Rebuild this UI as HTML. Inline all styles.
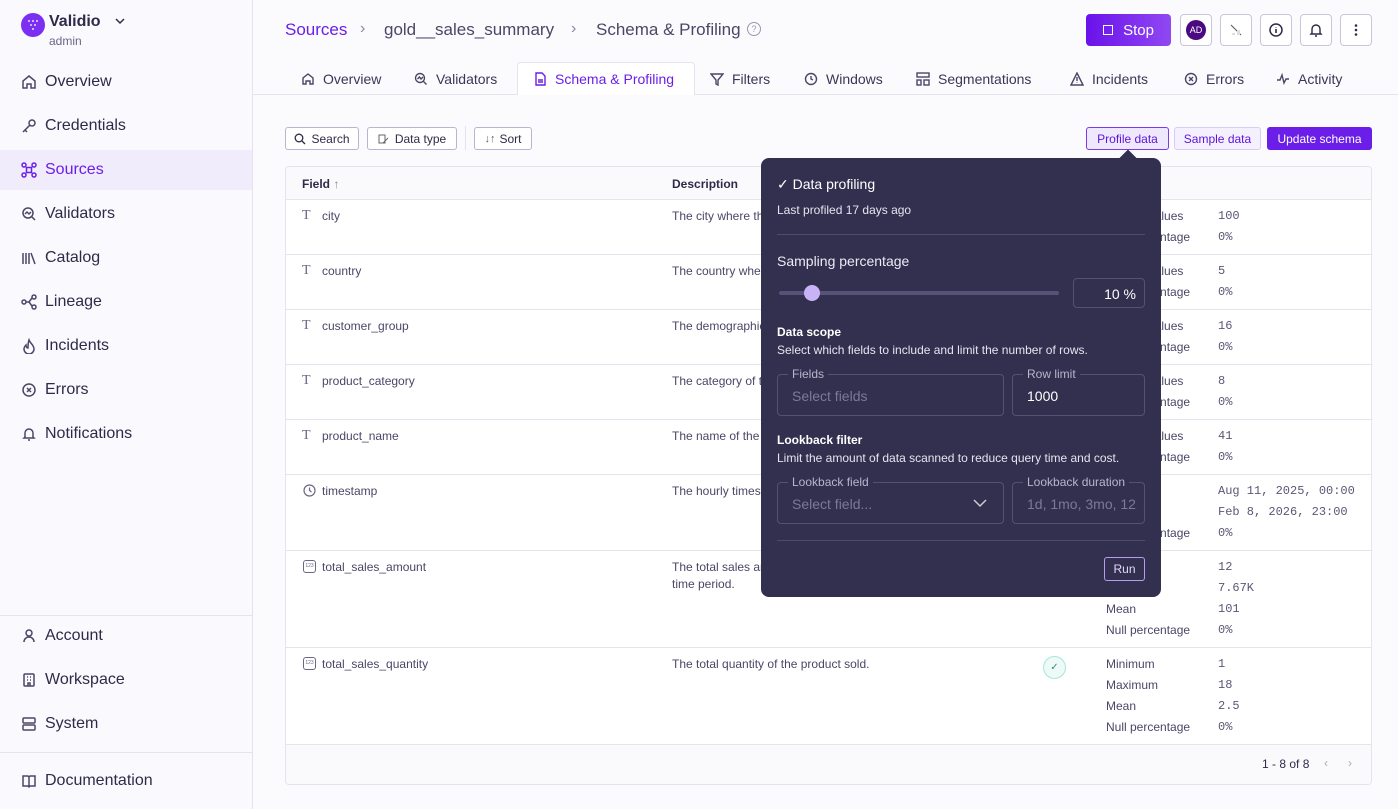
<!DOCTYPE html>
<html><head><meta charset="utf-8"><style>
*{box-sizing:border-box;margin:0;padding:0}
body{width:1398px;height:809px;overflow:hidden;font-family:"Liberation Sans",sans-serif;background:#fbfbfe;color:#2e2b48;position:relative}
.abs{position:absolute}
.side{position:absolute;left:0;top:0;width:253px;height:809px;background:#f9f9fe;border-right:1px solid #e4e3ee}
.nav{position:absolute;left:0;width:252px;height:40px;display:flex;align-items:center;padding-left:21px;font-size:16px;color:#2e2b48}
.nav svg{width:16px;height:16px;margin-right:8px;fill:none;stroke:#4a4766;stroke-width:1.5}
.nav.act{background:#f1ecfb;color:#6b1ee8}
.nav.act svg{stroke:#6b1ee8}
.hr{position:absolute;left:0;width:252px;border-top:1px solid #e4e3ee}
.tab{position:absolute;top:62px;height:33px;display:flex;align-items:center;font-size:14px;color:#3a3756}
.tab svg{width:14px;height:14px;margin-right:8px;fill:none;stroke:#4a4766;stroke-width:1.4}
.btn{position:absolute;height:23px;border:1px solid #b9b4d2;border-radius:3px;font-size:12px;display:flex;align-items:center;justify-content:center;background:#fff;color:#2e2b48}
.ib{position:absolute;top:14px;width:32px;height:32px;border:1px solid #c9c6dc;border-radius:4px;background:#fff;display:flex;align-items:center;justify-content:center}
.tbl{position:absolute;left:285px;top:166px;width:1087px;height:619px;border:1px solid #e4e3ee;border-radius:4px;background:#fff;overflow:hidden}
.row{position:absolute;left:0;width:1085px;border-top:1px solid #e4e3ee}
.t{position:absolute;font-size:12px;color:#4a4766;white-space:nowrap}
.m{font-family:"Liberation Mono",monospace;font-size:12px;color:#5a5775}
.ico{position:absolute;left:16px;font-family:"Liberation Serif",serif;font-size:14px;color:#6a6785}
.pop{position:absolute;left:761px;top:158px;width:400px;height:439px;background:#33304f;border-radius:8px;color:#fff}
.fld{position:absolute;height:42px;border:1px solid #555271;border-radius:4px}
.lg{position:absolute;top:-8px;left:10px;background:#33304f;padding:0 4px;font-size:12px;color:#b8b5cc}
.ph{position:absolute;left:14px;top:13px;font-size:14px;color:#7c7995}
</style></head><body>
<div class="side">
 <div class="abs" style="left:21px;top:13px;width:24px;height:24px;border-radius:50%;background:#7b2ff0"></div>
 <svg class="abs" style="left:27px;top:19px" width="12" height="12"><g fill="#e8d8ff"><circle cx="2" cy="2" r="1"/><circle cx="6" cy="2" r="1"/><circle cx="10" cy="2" r="1"/><circle cx="4" cy="6" r="1"/><circle cx="8" cy="6" r="1"/><circle cx="6" cy="10" r="1"/></g></svg>
 <div class="abs" style="left:49px;top:13px;font-size:16px;font-weight:bold;color:#2e2b48">Validio</div>
 <svg class="abs" style="left:114px;top:16px" width="12" height="10"><path d="M2 3l4 4 4-4" stroke="#2e2b48" stroke-width="1.5" fill="none"/></svg>
 <div class="abs" style="left:49px;top:34px;font-size:12px;color:#6a6785">admin</div>
 <div class="nav" style="top:62px"><svg viewBox="0 0 16 16"><path d="M2 14V7l6-5 6 5v7H10v-4H6v4z"/></svg>Overview</div>
 <div class="nav" style="top:106px"><svg viewBox="0 0 16 16"><circle cx="11" cy="5" r="3"/><path d="M9 7L2 14M4 12l2 2"/></svg>Credentials</div>
 <div class="nav act" style="top:150px"><svg viewBox="0 0 16 16"><circle cx="3" cy="3" r="2"/><circle cx="13" cy="3" r="2"/><circle cx="3" cy="13" r="2"/><circle cx="13" cy="13" r="2"/><rect x="5.5" y="5.5" width="5" height="5"/></svg>Sources</div>
 <div class="nav" style="top:194px"><svg viewBox="0 0 16 16"><circle cx="7" cy="7" r="5"/><path d="M11 11l3 3M4 8l2-2 2 2 2-2"/></svg>Validators</div>
 <div class="nav" style="top:238px"><svg viewBox="0 0 16 16"><path d="M2 3v11M5 3v11M8 3v11M10 3l4 11"/></svg>Catalog</div>
 <div class="nav" style="top:282px"><svg viewBox="0 0 16 16"><circle cx="3" cy="8" r="2"/><circle cx="13" cy="3" r="2"/><circle cx="13" cy="13" r="2"/><path d="M5 8h3l3-4M8 8l3 4"/></svg>Lineage</div>
 <div class="nav" style="top:326px"><svg viewBox="0 0 16 16"><path d="M8 2c1 3 5 5 5 9a5 5 0 01-10 0c0-2 1-3 2-4 0 2 1 3 2 3 0-3 0-5 1-8z"/></svg>Incidents</div>
 <div class="nav" style="top:370px"><svg viewBox="0 0 16 16"><circle cx="8" cy="8" r="6"/><path d="M6 6l4 4M10 6l-4 4"/></svg>Errors</div>
 <div class="nav" style="top:414px"><svg viewBox="0 0 16 16"><path d="M4 11V7a4 4 0 018 0v4l1 1H3zM7 14h2"/></svg>Notifications</div>
 <div class="hr" style="top:615px"></div>
 <div class="nav" style="top:616px"><svg viewBox="0 0 16 16"><circle cx="8" cy="5" r="3"/><path d="M3 14a5 5 0 0110 0"/></svg>Account</div>
 <div class="nav" style="top:660px"><svg viewBox="0 0 16 16"><rect x="3" y="2" width="10" height="12" rx="1"/><path d="M6 5h1M9 5h1M6 8h1M9 8h1M7 14v-3h2v3"/></svg>Workspace</div>
 <div class="nav" style="top:704px"><svg viewBox="0 0 16 16"><rect x="2" y="2" width="12" height="5" rx="1"/><rect x="2" y="9" width="12" height="5" rx="1"/></svg>System</div>
 <div class="hr" style="top:752px"></div>
 <div class="nav" style="top:761px"><svg viewBox="0 0 16 16"><path d="M2 3h5l1 1 1-1h5v10H9l-1 1-1-1H2zM8 4v10"/></svg>Documentation</div>
</div>

<div class="abs" style="left:285px;top:20px;font-size:17px;color:#6b1ee8">Sources</div>
<div class="abs" style="left:360px;top:20px;font-size:16px;color:#8a879f">›</div>
<div class="abs" style="left:384px;top:20px;font-size:17px;color:#4a4766">gold__sales_summary</div>
<div class="abs" style="left:571px;top:20px;font-size:16px;color:#8a879f">›</div>
<div class="abs" style="left:596px;top:20px;font-size:17px;color:#4a4766">Schema &amp; Profiling</div>
<div class="abs" style="left:747px;top:22px;width:14px;height:14px;border:1px solid #9a97b0;border-radius:50%;font-size:9px;color:#9a97b0;text-align:center;line-height:12px">?</div>

<div class="abs" style="left:1086px;top:14px;width:85px;height:32px;border-radius:4px;background:linear-gradient(90deg,#6a12ea,#9048f2);color:#fff;font-size:15px;display:flex;align-items:center;justify-content:center"><span style="width:10px;height:10px;border:1.5px solid #fff;margin-right:10px"></span>Stop</div>
<div class="ib" style="left:1180px"><div style="width:20px;height:20px;border-radius:50%;background:#4a0a82;color:#fff;font-size:9px;text-align:center;line-height:20px">AD</div></div>
<div class="ib" style="left:1220px"><svg width="16" height="16"><path d="M3 3l10 10" stroke="#555" stroke-width="1"/><rect x="9" y="8" width="3" height="5" fill="#ddd"/><rect x="4" y="11" width="3" height="2" fill="#ddd"/></svg></div>
<div class="ib" style="left:1260px"><svg width="16" height="16"><circle cx="8" cy="8" r="6" stroke="#2e2b48" stroke-width="1.5" fill="none"/><path d="M8 7v4M8 5v.5" stroke="#2e2b48" stroke-width="1.6"/></svg></div>
<div class="ib" style="left:1300px"><svg width="16" height="16"><path d="M4 11V7a4 4 0 018 0v4l1 1H3zM7 14h2" stroke="#2e2b48" stroke-width="1.4" fill="none"/></svg></div>
<div class="ib" style="left:1340px"><svg width="16" height="16" fill="#2e2b48"><circle cx="8" cy="3.5" r="1.3"/><circle cx="8" cy="8" r="1.3"/><circle cx="8" cy="12.5" r="1.3"/></svg></div>

<div class="abs" style="left:253px;top:94px;width:1145px;border-top:1px solid #e4e3ee"></div>
<div class="abs" style="left:517px;top:62px;width:178px;height:33px;background:#fff;border:1px solid #e4e3ee;border-bottom:none;border-radius:4px 4px 0 0"></div>
<div class="tab" style="left:301px"><svg viewBox="0 0 14 14"><path d="M2 12V6l5-4 5 4v6H9V9H5v3z"/></svg>Overview</div>
<div class="tab" style="left:414px"><svg viewBox="0 0 14 14"><circle cx="6" cy="6" r="4.5"/><path d="M9.5 9.5l3 3M3.5 7l2-2 1.5 2 2-2"/></svg>Validators</div>
<div class="tab" style="left:533px;color:#6b1ee8"><svg viewBox="0 0 14 14" style="stroke:#6b1ee8"><path d="M3 1h6l3 3v9H3zM5 8h5M5 10h5" /></svg>Schema &amp; Profiling</div>
<div class="tab" style="left:710px"><svg viewBox="0 0 14 14"><path d="M1 2h12L8 8v5L6 12V8z"/></svg>Filters</div>
<div class="tab" style="left:804px"><svg viewBox="0 0 14 14"><circle cx="7" cy="7" r="5.5"/><path d="M7 4v3l2 1"/></svg>Windows</div>
<div class="tab" style="left:916px"><svg viewBox="0 0 14 14"><rect x="1" y="1" width="12" height="4"/><rect x="1" y="8" width="4" height="5"/><rect x="8" y="8" width="5" height="5"/></svg>Segmentations</div>
<div class="tab" style="left:1070px"><svg viewBox="0 0 14 14"><path d="M7 1l6 12H1zM7 5v4M7 10.5v.5"/></svg>Incidents</div>
<div class="tab" style="left:1184px"><svg viewBox="0 0 14 14"><circle cx="7" cy="7" r="5.5"/><path d="M5 5l4 4M9 5l-4 4"/></svg>Errors</div>
<div class="tab" style="left:1276px"><svg viewBox="0 0 14 14"><path d="M1 8h3l2-5 2 8 2-4h3"/></svg>Activity</div>

<div class="btn" style="left:285px;top:127px;width:74px"><svg width="12" height="12" style="margin-right:5px"><circle cx="5" cy="5" r="3.8" stroke="#2e2b48" stroke-width="1.3" fill="none"/><path d="M8 8l3 3" stroke="#2e2b48" stroke-width="1.3"/></svg>Search</div>
<div class="btn" style="left:367px;top:127px;width:90px"><svg width="12" height="12" style="margin-right:5px"><rect x="1" y="2" width="6" height="8" stroke="#666" fill="none"/><path d="M5 10l5-5" stroke="#666"/></svg>Data type</div>
<div class="abs" style="left:465px;top:126px;height:24px;border-left:1px solid #e4e3ee"></div>
<div class="btn" style="left:474px;top:127px;width:58px"><span style="font-size:11px;color:#666;margin-right:4px">↓↑</span>Sort</div>
<div class="btn" style="left:1086px;top:127px;width:83px;border-color:#7c3aed;background:#efe8fd;color:#5b14d8;border-width:1.5px">Profile data</div>
<div class="btn" style="left:1174px;top:127px;width:87px;border-color:#d9cdf8;background:#f5f0fe;color:#5b14d8">Sample data</div>
<div class="btn" style="left:1267px;top:127px;width:105px;border-color:#6b1ee8;background:#6b1ee8;color:#fff">Update schema</div>

<div class="tbl">
 <div class="abs" style="left:0;top:0;width:1085px;height:32px;background:#fafafd"></div>
 <div class="t" style="left:16px;top:10px;font-weight:bold;color:#2e2b48">Field <span style="color:#888;font-weight:normal">↑</span></div>
 <div class="t" style="left:386px;top:10px;font-weight:bold;color:#2e2b48">Description</div>
 <div class="t" style="left:815px;top:10px;font-weight:bold;color:#2e2b48">Statistics</div>

 <div class="row" style="top:32px;height:55px"><span class="ico" style="top:8px">T</span><span class="t" style="left:36px;top:9px">city</span><span class="t" style="left:386px;top:9px">The city where the sale occurred.</span><span class="t" style="left:820px;top:9px">Distinct values</span><span class="t m" style="left:932px;top:9px">100</span><span class="t" style="left:820px;top:30px">Null percentage</span><span class="t m" style="left:932px;top:30px">0%</span></div>
 <div class="row" style="top:87px;height:55px"><span class="ico" style="top:8px">T</span><span class="t" style="left:36px;top:9px">country</span><span class="t" style="left:386px;top:9px">The country where the sale occurred.</span><span class="t" style="left:820px;top:9px">Distinct values</span><span class="t m" style="left:932px;top:9px">5</span><span class="t" style="left:820px;top:30px">Null percentage</span><span class="t m" style="left:932px;top:30px">0%</span></div>
 <div class="row" style="top:142px;height:55px"><span class="ico" style="top:8px">T</span><span class="t" style="left:36px;top:9px">customer_group</span><span class="t" style="left:386px;top:9px">The demographic group of the customer.</span><span class="t" style="left:820px;top:9px">Distinct values</span><span class="t m" style="left:932px;top:9px">16</span><span class="t" style="left:820px;top:30px">Null percentage</span><span class="t m" style="left:932px;top:30px">0%</span></div>
 <div class="row" style="top:197px;height:55px"><span class="ico" style="top:8px">T</span><span class="t" style="left:36px;top:9px">product_category</span><span class="t" style="left:386px;top:9px">The category of the product.</span><span class="t" style="left:820px;top:9px">Distinct values</span><span class="t m" style="left:932px;top:9px">8</span><span class="t" style="left:820px;top:30px">Null percentage</span><span class="t m" style="left:932px;top:30px">0%</span></div>
 <div class="row" style="top:252px;height:55px"><span class="ico" style="top:8px">T</span><span class="t" style="left:36px;top:9px">product_name</span><span class="t" style="left:386px;top:9px">The name of the product.</span><span class="t" style="left:820px;top:9px">Distinct values</span><span class="t m" style="left:932px;top:9px">41</span><span class="t" style="left:820px;top:30px">Null percentage</span><span class="t m" style="left:932px;top:30px">0%</span></div>
 <div class="row" style="top:307px;height:76px"><svg class="abs" style="left:17px;top:9px" width="13" height="13"><circle cx="6.5" cy="6.5" r="5.5" stroke="#6a6785" stroke-width="1.2" fill="none"/><path d="M6.5 3.5v3l2 1.5" stroke="#6a6785" stroke-width="1.2" fill="none"/></svg><span class="t" style="left:36px;top:9px">timestamp</span><span class="t" style="left:386px;top:9px">The hourly timestamp of the sale.</span><span class="t" style="left:820px;top:9px">Minimum</span><span class="t m" style="left:932px;top:9px">Aug 11, 2025, 00:00</span><span class="t" style="left:820px;top:30px">Maximum</span><span class="t m" style="left:932px;top:30px">Feb 8, 2026, 23:00</span><span class="t" style="left:820px;top:51px">Null percentage</span><span class="t m" style="left:932px;top:51px">0%</span></div>
 <div class="row" style="top:383px;height:97px"><span class="abs" style="left:17px;top:9px;width:13px;height:13px;border:1px solid #6a6785;border-radius:3px;font-size:5px;text-align:center;line-height:11px;color:#6a6785">123</span><span class="t" style="left:36px;top:9px">total_sales_amount</span><span class="t" style="left:386px;top:9px">The total sales amount for the product in the</span><span class="t" style="left:386px;top:26px">time period.</span><span class="t" style="left:820px;top:9px">Minimum</span><span class="t m" style="left:932px;top:9px">12</span><span class="t" style="left:820px;top:30px">Maximum</span><span class="t m" style="left:932px;top:30px">7.67K</span><span class="t" style="left:820px;top:51px">Mean</span><span class="t m" style="left:932px;top:51px">101</span><span class="t" style="left:820px;top:72px">Null percentage</span><span class="t m" style="left:932px;top:72px">0%</span></div>
 <div class="row" style="top:480px;height:97px"><span class="abs" style="left:17px;top:9px;width:13px;height:13px;border:1px solid #6a6785;border-radius:3px;font-size:5px;text-align:center;line-height:11px;color:#6a6785">123</span><span class="t" style="left:36px;top:9px">total_sales_quantity</span><span class="t" style="left:386px;top:9px">The total quantity of the product sold.</span>
  <div class="abs" style="left:757px;top:8px;width:23px;height:23px;border-radius:50%;border:1px solid #a9e5d8;background:#eefaf7;text-align:center;font-size:10px;line-height:21px;color:#3a8a78">✓</div>
  <span class="t" style="left:820px;top:9px">Minimum</span><span class="t m" style="left:932px;top:9px">1</span><span class="t" style="left:820px;top:30px">Maximum</span><span class="t m" style="left:932px;top:30px">18</span><span class="t" style="left:820px;top:51px">Mean</span><span class="t m" style="left:932px;top:51px">2.5</span><span class="t" style="left:820px;top:72px">Null percentage</span><span class="t m" style="left:932px;top:72px">0%</span></div>
 <div class="abs" style="left:0;top:577px;width:1085px;height:42px;background:#fafafd;border-top:1px solid #e4e3ee"></div>
</div>
<div class="t" style="left:1262px;top:757px;color:#2e2b48">1 - 8 of 8</div>
<div class="t" style="left:1324px;top:756px;color:#aaa">‹</div>
<div class="t" style="left:1348px;top:756px;color:#aaa">›</div>

<div class="abs" style="left:1122px;top:152px;width:12px;height:12px;background:#33304f;transform:rotate(45deg)"></div>
<div class="pop">
 <div class="abs" style="left:16px;top:18px;font-size:14px">✓ Data profiling</div>
 <div class="abs" style="left:16px;top:45px;font-size:12px;color:#e6e4f0">Last profiled 17 days ago</div>
 <div class="abs" style="left:16px;top:76px;width:368px;border-top:1px solid #4e4b6a"></div>
 <div class="abs" style="left:16px;top:95px;font-size:14px;color:#eceaf4">Sampling percentage</div>
 <div class="abs" style="left:18px;top:133px;width:280px;height:4px;border-radius:2px;background:#56527a"></div>
 <div class="abs" style="left:43px;top:127px;width:16px;height:16px;border-radius:50%;background:#c9b3f7"></div>
 <div class="fld" style="left:312px;top:120px;width:72px;height:30px"><span class="abs" style="right:8px;top:7px;font-size:14px">10 %</span></div>
 <div class="abs" style="left:16px;top:167px;font-size:12px;font-weight:bold">Data scope</div>
 <div class="abs" style="left:16px;top:185px;font-size:12px;color:#e6e4f0">Select which fields to include and limit the number of rows.</div>
 <div class="fld" style="left:16px;top:216px;width:227px"><span class="lg">Fields</span><span class="ph">Select fields</span></div>
 <div class="fld" style="left:251px;top:216px;width:133px"><span class="lg">Row limit</span><span class="ph" style="color:#fff">1000</span></div>
 <div class="abs" style="left:16px;top:275px;font-size:12px;font-weight:bold">Lookback filter</div>
 <div class="abs" style="left:16px;top:293px;font-size:12px;color:#e6e4f0">Limit the amount of data scanned to reduce query time and cost.</div>
 <div class="fld" style="left:16px;top:324px;width:227px"><span class="lg">Lookback field</span><span class="ph">Select field...</span><svg class="abs" style="left:194px;top:14px" width="16" height="12"><path d="M2 3l6 6 6-6" stroke="#ccc" stroke-width="1.5" fill="none"/></svg></div>
 <div class="fld" style="left:251px;top:324px;width:133px;overflow:visible"><span class="lg">Lookback duration</span><span class="ph" style="width:110px;overflow:hidden;white-space:nowrap">1d, 1mo, 3mo, 12mo</span></div>
 <div class="abs" style="left:16px;top:382px;width:368px;border-top:1px solid #4e4b6a"></div>
 <div class="abs" style="left:343px;top:399px;width:41px;height:24px;border:1px solid #b49cf0;border-radius:3px;font-size:12px;text-align:center;line-height:22px;color:#e0d6fb">Run</div>
</div>
</body></html>
